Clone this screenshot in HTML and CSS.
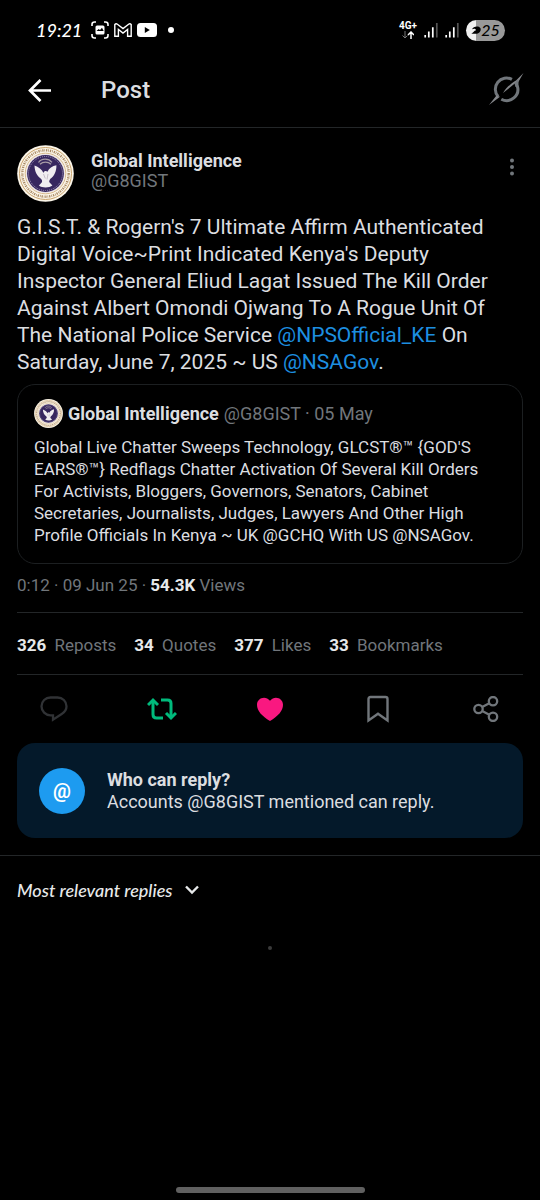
FILE: index.html
```html
<!DOCTYPE html>
<html lang="en">
<head>
<meta charset="utf-8">
<meta name="viewport" content="width=device-width, initial-scale=1">
<title>Post</title>
<link rel="stylesheet" href="styles.css">
</head>
<body>
<svg class="symbols" aria-hidden="true">
  <symbol id="seal" viewBox="0 0 57 57">
    <circle cx="28.5" cy="28.5" r="28.3" fill="#fbf5e8"/>
    <circle cx="28.5" cy="28.5" r="26" fill="none" stroke="#c9a36c" stroke-width="1"/>
    <circle cx="28.5" cy="28.5" r="23.2" fill="none" stroke="#a98962" stroke-width="2.4" stroke-dasharray="1.3 .9 .7 1"/>
    <circle cx="28.5" cy="28.5" r="20.3" fill="none" stroke="#d3b384" stroke-width=".9"/>
    <circle cx="28.5" cy="28.5" r="19.4" fill="#e9e2e6"/>
    <circle cx="28.5" cy="28.5" r="18.4" fill="#37275f"/>
    <circle cx="28.5" cy="28.5" r="17" fill="none" stroke="#a9a0bd" stroke-width=".9" stroke-dasharray="1 1"/>
    <path d="M21.500 17.500c3-4.500 10-4.500 13.500-.2M23 19.300c3-2.800 8-2.800 11 0" fill="none" stroke="#a79ba6" stroke-width="1.300"/>
    <path d="M17.500 20.500c4 1.500 7.500 4 9 7.500.5-2 2.500-2.500 4-1.200 1.500-3.500 4.800-5.700 8.900-6.500.2 6-2.200 11-6 13.500-1 1.500-1.500 2.500-1 3.500l3 3.200c-3 2.500-10 2.800-13.500 0l3-3.200c.5-1.500 0-2.500-1-3.500-4-3-6.300-7.500-6.400-13.300z" fill="#f0edf0"/>
    <path d="M26.500 29l1.800 4.500M31 29l-1 5.500" stroke="#b3a9b4" stroke-width=".7"/>
  </symbol>
  <symbol id="signal" viewBox="0 0 14 15">
    <path d="M1.200 12v2.500M4.800 8.500v6M8.800 4.200v10.300" stroke="#fff" stroke-width="1.700"/>
    <path d="M12.800 0v14.500" stroke="#555" stroke-width="1.700"/>
  </symbol>
</svg>

<div class="screen">
  <div class="status">
    <span class="time">19:21</span>
    <div class="notices">
      <svg width="18" height="18" viewBox="0 0 18 18" fill="none" stroke="#fff" stroke-width="1.600">
        <path d="M1 5V3.500Q1 1 3.500 1H5M13 1h1.500Q17 1 17 3.500V5M17 13v1.500Q17 17 14.500 17H13M5 17H3.500Q1 17 1 14.500V13"/>
        <rect x="4.500" y="4.500" width="9" height="9" rx="1.500" fill="#fff" stroke="none"/>
        <path d="M5.500 10l2.200-2 1.300 1 2-2.200 1.700 3.200z" fill="#000" stroke="none"/>
      </svg>
      <svg width="18" height="14" viewBox="0 0 18 14" fill="none" stroke="#fff" stroke-width="1.400">
        <path d="M.8 13.200V1.500Q2 .2 3.400 1.200L9 5.600l5.600-4.400Q16 .2 17.200 1.500v11.700h-3.600V6.500L9 10 4.400 6.500v6.700z"/>
      </svg>
      <svg width="20" height="14" viewBox="0 0 20 14">
        <rect width="20" height="14" rx="3.500" fill="#fff"/><path d="M7.800 4v6l5-3z" fill="#000"/>
      </svg>
      <i class="more-dot"></i>
    </div>
    <div class="radio">
      <div class="network">
        <span>4G+</span>
        <svg width="12" height="8" viewBox="0 0 12 8" fill="none" stroke-width="1.500">
          <path d="M3 0v7M.5 4.500L3 7l2.500-2.500" stroke="#777" stroke-width="1"/><path d="M9 8V1M6 4l3-3 3 3" stroke="#fff"/>
        </svg>
      </div>
      <svg width="14" height="15"><use href="#signal"/></svg>
      <svg width="14" height="15"><use href="#signal"/></svg>
      <div class="battery">
        <svg width="10" height="10" viewBox="0 0 10 10"><path d="M.3 8.500C2.500 8 3 5.500 5 5.300 4.500 3.500 3 3.400 1 4.300 2 1 8.500.3 9.600 3.500 10.300 7.500 6.500 9.800.3 8.500z" fill="#000"/></svg>
        <span>25</span>
      </div>
    </div>
  </div>

  <header class="bar">
    <button class="icon-button" aria-label="Back">
      <svg width="24" height="24" viewBox="0 0 24 24" fill="none" stroke="#fff" stroke-width="2.700"><path d="M24 12.500H3.500M13.500 2L3 12.500 13.500 23"/></svg>
    </button>
    <h1>Post</h1>
    <button class="icon-button" aria-label="Grok">
      <svg width="35" height="34" viewBox="0 0 35 34">
        <path d="M9.100 23.600A11.200 11.200 0 0 1 22.900 6.400M28.200 12.700A11.200 11.200 0 0 1 12.300 26.200" fill="none" stroke="#71767b" stroke-width="3"/>
        <path d="M34.500 0L29 9.500l-3.500 1.300L14 20c3-5 8-9.500 13-12.500zM0 32l7.500-9.500 3.500 1.300z" fill="#84868a"/>
        <path d="M25.500 10.500L29.500 6v8h-3z" fill="#71767b"/>
      </svg>
    </button>
  </header>

  <main>
    <article class="post">
      <div class="author">
        <svg class="avatar" role="img" aria-label="Global Intelligence"><use href="#seal"/></svg>
        <div class="names"><strong>Global Intelligence</strong><span>@G8GIST</span></div>
        <button class="icon-button" aria-label="More">
          <svg width="6" height="18" viewBox="0 0 6 18" fill="#71767b"><circle cx="3" cy="2.500" r="2"/><circle cx="3" cy="9" r="2"/><circle cx="3" cy="15.500" r="2"/></svg>
        </button>
      </div>
      <p class="text">G.I.S.T. &amp; Rogern's 7 Ultimate Affirm Authenticated<br>
        Digital Voice~Print Indicated Kenya's Deputy<br>
        Inspector General Eliud Lagat Issued The Kill Order<br>
        Against Albert Omondi Ojwang To A Rogue Unit Of<br>
        The National Police Service <a href="#">@NPSOfficial_KE</a> On<br>
        Saturday, June 7, 2025 ~ US <a href="#">@NSAGov</a>.</p>

      <section class="quote">
        <div class="quote-head">
          <svg class="avatar-small" aria-hidden="true"><use href="#seal"/></svg>
          <strong>Global Intelligence</strong><span>@G8GIST · 05 May</span>
        </div>
        <p>Global Live Chatter Sweeps Technology, GLCST®™ {GOD'S<br>
          EARS®™} Redflags Chatter Activation Of Several Kill Orders<br>
          For Activists, Bloggers, Governors, Senators, Cabinet<br>
          Secretaries, Journalists, Judges, Lawyers And Other High<br>
          Profile Officials In Kenya ~ UK @GCHQ With US @NSAGov.</p>
      </section>

      <p class="meta">0:12 · 09 Jun 25 · <strong>54.3K</strong> Views</p>
      <div class="stats">
        <span><strong>326</strong> Reposts</span>
        <span><strong>34</strong> Quotes</span>
        <span><strong>377</strong> Likes</span>
        <span><strong>33</strong> Bookmarks</span>
      </div>
      <div class="actions">
        <button class="icon-button" aria-label="Reply" disabled>
          <svg width="28" height="26" viewBox="0 0 28 26" fill="none" stroke="#303235" stroke-width="2.300"><path d="M10.500 1.500h7c5 0 9 3.800 9 8.800 0 3.500-1.900 6-4.800 7.700L13 23.700v-4.400h-2.500c-5 0-9-4-9-9s4-8.800 9-8.800z"/></svg>
        </button>
        <button class="icon-button" aria-label="Undo repost">
          <svg width="30" height="22" viewBox="0 0 30 22" fill="none" stroke="#00ba7c" stroke-width="3"><path d="M6 3v13.500Q6 20 9.500 20H16M14 2h6.500Q24 2 24 5.500V19"/><path d="M1 7l5-4.800L11 7M19 15l5 4.800L29 15"/></svg>
        </button>
        <button class="icon-button" aria-label="Unlike">
          <svg width="28" height="24" viewBox="0 0 28 24"><path d="M14 24C6 19 1 14 1 7.700 1 1 9.500-2 14 3.800 18.500-2 27 1 27 7.700 27 14 22 19 14 24z" fill="#f91880"/></svg>
        </button>
        <button class="icon-button" aria-label="Bookmark">
          <svg width="22" height="28" viewBox="0 0 22 28" fill="none" stroke="#71767b" stroke-width="2.400"><path d="M1.500 25.500V4Q1.500 2 3.500 2h15q2 0 2 2v21.500L11 18.700z"/></svg>
        </button>
        <button class="icon-button" aria-label="Share">
          <svg width="26" height="26" viewBox="0 0 26 26" fill="none" stroke="#71767b" stroke-width="2.300"><circle cx="5.500" cy="13" r="4.200"/><circle cx="20" cy="5.200" r="4.200"/><circle cx="20" cy="20.800" r="4.200"/><path d="M9.200 11l7.100-3.800M9.200 15l7.100 3.800"/></svg>
        </button>
      </div>

      <section class="notice">
        <span class="at">@</span>
        <div><strong>Who can reply?</strong><p>Accounts @G8GIST mentioned can reply.</p></div>
      </section>
    </article>

    <button class="sort">Most relevant replies
      <svg width="14" height="10" viewBox="0 0 14 10" fill="none" stroke="#e7e9ea" stroke-width="2.400"><path d="M1 1.500l6 6 6-6"/></svg>
    </button>
    <div class="loading"></div>
  </main>
  <div class="home"></div>
</div>
</body>
</html>
```

FILE: styles.css
```css
* { box-sizing: border-box; }
body {
  margin: 0;
  background: #000;
  color: #dcdee0;
  font: 17px/22px Roboto, "Liberation Sans", sans-serif;
}
h1, p { margin: 0; }
svg { display: block; flex: none; }
strong { font-weight: 700; }
a { color: #1d8fe0; text-decoration: none; }
.symbols { position: absolute; width: 0; height: 0; }
.icon-button { display: flex; justify-content: center; padding: 0; border: 0; background: none; }
.screen { display: flex; flex-direction: column; min-height: 100vh; }

.status {
  display: flex;
  align-items: center;
  height: 60px;
  padding: 0 35px 0 36px;
}
.time { width: 55px; color: #fff; font: italic 500 18px/20px Lato, sans-serif; }
.notices { display: flex; align-items: center; gap: 5px; }
.more-dot { width: 6px; height: 6px; margin-left: 6px; border-radius: 50%; background: #fff; }
.radio { display: flex; align-items: center; gap: 7px; margin-left: auto; }
.network { display: flex; flex-direction: column; align-items: center; color: #fff; font-size: 10px; font-weight: 700; line-height: 10px; }
.battery {
  display: flex;
  align-items: center;
  justify-content: center;
  width: 39px;
  height: 21px;
  border-radius: 11px;
  background: linear-gradient(90deg, #f0f0f0 26%, #999 26%);
  color: #000;
  font: italic 500 16px/20px Lato, sans-serif;
}

.bar {
  display: flex;
  align-items: center;
  height: 68px;
  padding: 0 16px 7px 27px;
  border-bottom: 1px solid #232628;
}
.bar h1 { flex: 1; margin-left: 50px; font-size: 24px; font-weight: 500; line-height: 28px; }

.post { padding: 17px 17px; border-bottom: 1px solid #232628; }
.author { display: flex; gap: 17px; font-size: 18px; }
.avatar { width: 57px; height: 57px; }
.names { display: flex; flex: 1; flex-direction: column; padding-top: 6px; line-height: 20px; }
.names span, .quote-head span, .meta, .stats { color: #71767b; }
.author .icon-button { height: 18px; margin: 13px 8px 0 0; }
.text { margin-top: 12px; font-size: 21px; line-height: 27px; }

.quote { margin-top: 8px; padding: 14px 16px; border: 1px solid #1c1f21; border-radius: 18px; }
.quote-head { display: flex; align-items: center; gap: 5px; height: 29px; font-size: 18px; }
.avatar-small { width: 29px; height: 29px; }
.quote p { margin-top: 8px; padding-bottom: 3px; }

.meta { margin-top: 10px; padding-bottom: 16px; border-bottom: 1px solid #232628; }
.meta strong, .stats strong { color: #e7e9ea; }
.stats { display: flex; gap: 18px; padding: 21px 0 18px; border-bottom: 1px solid #232628; }
.stats strong { margin-right: 4px; }
.actions { display: flex; align-items: center; height: 68px; margin: 0 -17px; }
.actions .icon-button { flex: 1; }

.notice {
  display: flex;
  align-items: center;
  gap: 22px;
  min-height: 95px;
  padding: 0 22px;
  border-radius: 18px;
  background: #04192a;
  font-size: 18px;
}
.at {
  display: grid;
  place-items: center;
  width: 46px;
  height: 46px;
  border-radius: 50%;
  background: #1d9bf0;
  color: #fff;
  font-size: 20px;
  font-weight: 700;
}

.sort {
  display: flex;
  align-items: center;
  gap: 12px;
  margin: 23px 17px 0;
  padding: 0;
  border: 0;
  background: none;
  color: #e7e9ea;
  font: italic 500 18px/22px Lato, sans-serif;
}
.loading { width: 4px; height: 4px; margin: 45px auto 0; border-radius: 50%; background: #3b3b3b; }
.home { width: 35%; height: 6px; margin: auto auto 7px; border-radius: 3px; background: #606060; }
```
